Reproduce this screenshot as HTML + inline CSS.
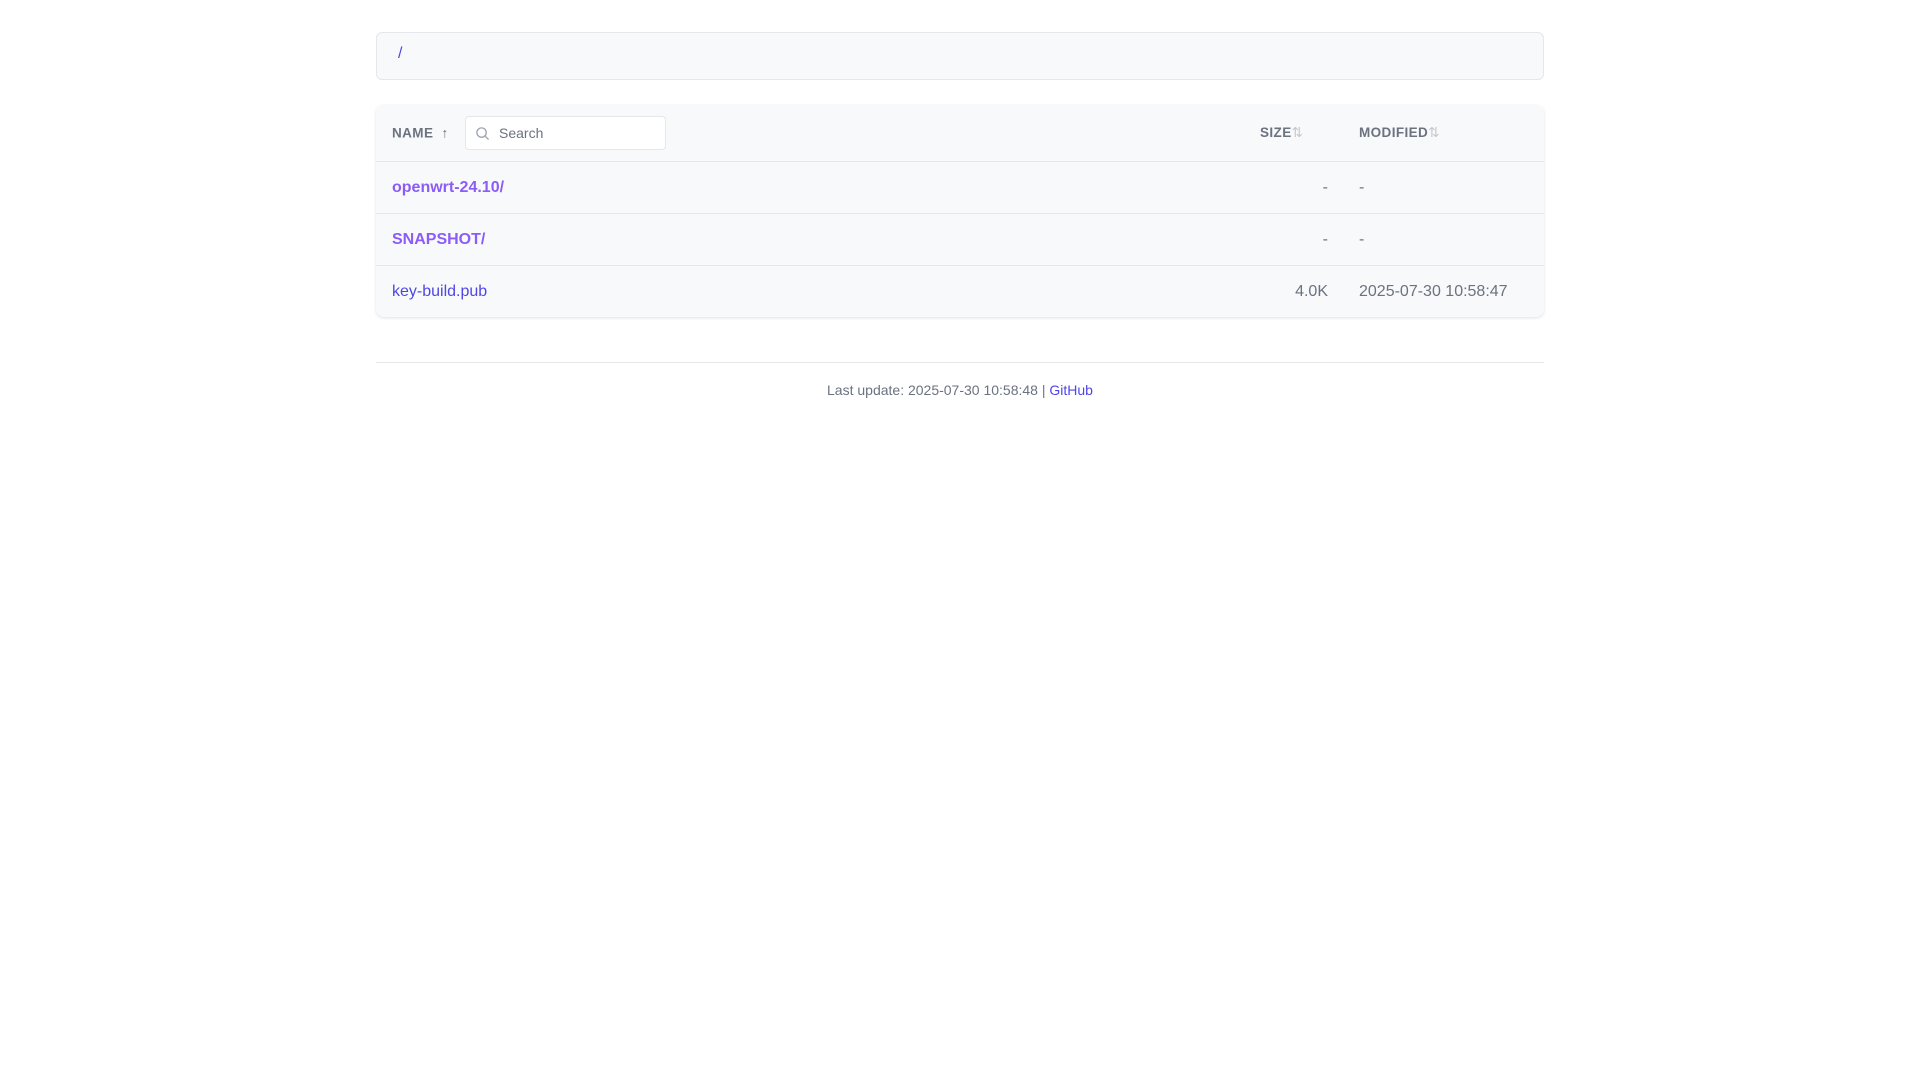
<!DOCTYPE html>
<html><head><meta charset="utf-8"><style>
body{margin:0;background:#fff;font-family:"Liberation Sans",sans-serif;}
.wrap{position:absolute;left:376px;width:1168px;top:32px;}
.crumb{height:46px;border:1px solid #e5e7eb;border-radius:6px;background:#f8f9fb;box-sizing:content-box;}
.crumb span{position:absolute;left:22px;top:13px;color:#4f46e5;font-size:16px;}
.tbl{position:absolute;top:73px;left:0;width:1168px;background:#f8f9fb;border-radius:8px;box-shadow:0 1px 3px rgba(0,0,0,.12);overflow:hidden;}
.row{position:relative;height:51px;border-top:1px solid #e5e7eb;font-size:16px;}
.hd{height:56px;border-top:none;font-size:13.5px;font-weight:bold;color:#6b7280;letter-spacing:.4px;}
.c{position:absolute;top:50%;transform:translateY(-50%);white-space:nowrap;}
.search{position:absolute;left:89px;top:11px;width:199px;height:32px;border:1px solid #e5e7eb;border-radius:4px;background:#fff;}
.search span{position:absolute;left:33px;top:8px;color:#6b7280;font-size:14px;font-weight:normal;letter-spacing:0;}
.dir{color:#8b5cf6;font-weight:bold;}
.file{color:#4f46e5;}
.g{color:#6b7280;}
.foot{position:absolute;top:330px;left:0;width:1168px;border-top:1px solid #e5e7eb;text-align:center;font-size:14px;color:#6b7280;padding-top:19px;}
.foot a{color:#4f46e5;text-decoration:none;}
</style></head><body>
<div class="wrap">
<div class="crumb"><span>/</span></div>
<div class="tbl">
<div class="row hd">
<span class="c" style="left:16px">NAME <span style="font-weight:normal;margin-left:4px">↑</span></span>
<div class="search"><svg style="position:absolute;left:9px;top:9px" width="15" height="15" viewBox="0 0 16 16" fill="none" stroke="#9ca3af" stroke-width="1.4"><circle cx="7" cy="7" r="5"/><path d="M11 11l3.5 3.5"/></svg><span>Search</span></div>
<span class="c" style="left:884px">SIZE<span style="color:#c4c7ce;font-weight:normal">⇅</span></span>
<span class="c" style="left:983px">MODIFIED<span style="color:#c4c7ce;font-weight:normal">⇅</span></span>
</div>
<div class="row"><span class="c dir" style="left:16px">openwrt-24.10/</span><span class="c g" style="right:216px">-</span><span class="c g" style="left:983px">-</span></div>
<div class="row"><span class="c dir" style="left:16px">SNAPSHOT/</span><span class="c g" style="right:216px">-</span><span class="c g" style="left:983px">-</span></div>
<div class="row"><span class="c file" style="left:16px">key-build.pub</span><span class="c g" style="right:216px">4.0K</span><span class="c g" style="left:983px">2025-07-30 10:58:47</span></div>
</div>
<div class="foot">Last update: 2025-07-30 10:58:48 | <a>GitHub</a></div>
</div>
</body></html>
